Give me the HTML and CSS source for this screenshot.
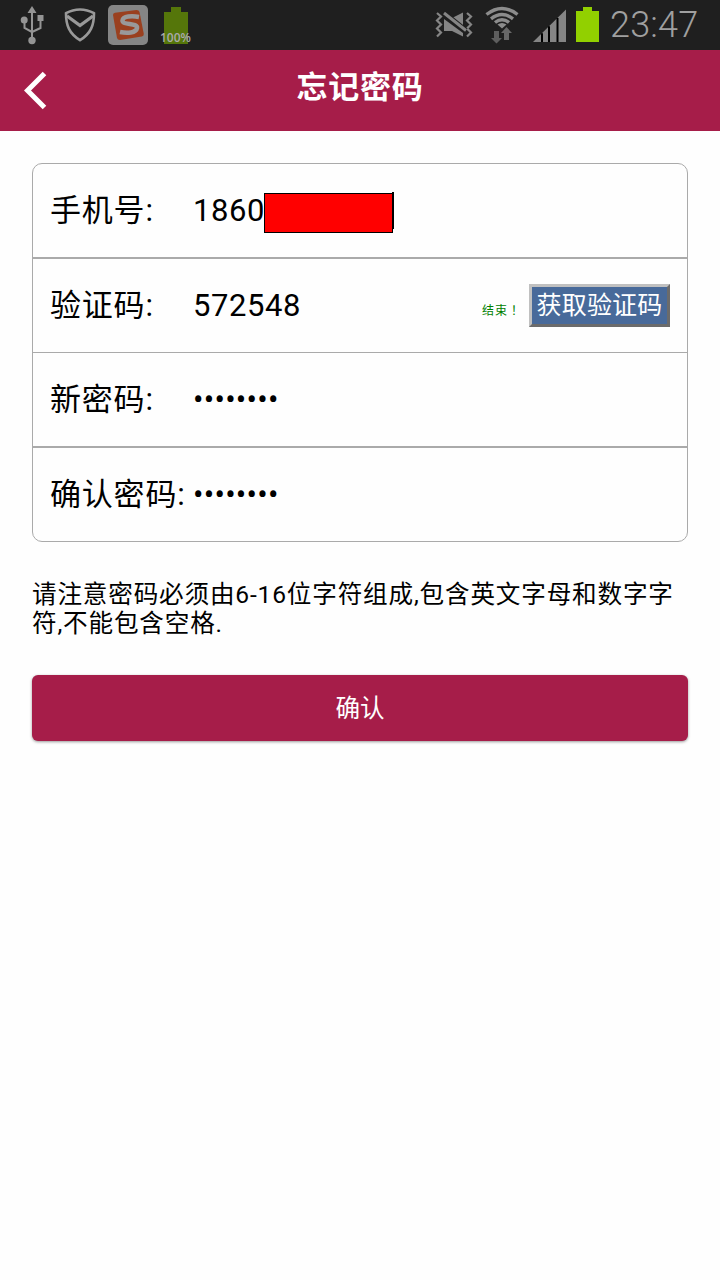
FILE: index.html
```html
<!DOCTYPE html>
<html lang="zh-CN">

<head>
    <meta charset="UTF-8">
    <meta name="viewport" content="width=device-width, initial-scale=1.0">
    <title>忘记密码</title>
    <link rel="stylesheet" href="styles.css">
</head>

<body>
    <div class="status-bar">
        <div class="status-left">
            <!-- usb -->
            <svg class="icon-usb" width="24" height="50" viewBox="0 0 24 50">
                <g fill="none" stroke="#949494" stroke-width="2">
                    <path d="M12 10v30M4.500 20v8l7.500 4M20.500 20v8L12 32" />
                </g>
                <path d="M12 6l4.500 7h-9zM17.500 15h6v6h-6z" fill="#949494" />
                <circle cx="4.200" cy="20" r="3.500" fill="#949494" />
                <circle cx="12" cy="40.500" r="3.700" fill="#949494" />
            </svg>
            <!-- shield -->
            <svg class="icon-shield" width="34" height="50" viewBox="0 0 34 50">
                <path d="M17 9.500c-4.500 0-9.500 1.200-14 3.700 0 12 3 20 14 27 11-7 14-15 14-27-4.500-2.500-9.500-3.700-14-3.700z" fill="none" stroke="#999" stroke-width="2.600" />
                <path d="M4 16l13 9.500L30 16" fill="none" stroke="#999" stroke-width="3.400" />
            </svg>
            <!-- input method -->
            <svg class="icon-ime" width="40" height="50" viewBox="0 0 40 50">
                <rect x="0" y="5" width="40" height="40" rx="5" fill="#858585" />
                <path d="M5 15q0-2 2-2.300L28.500 10q2.500 0 3 2l4.300 22q0 2-2 2.500L12 40q-2.500 0-3-2z" fill="#9a401f" />
                <path d="M31 17c-7-1.300-16-1-16.500 3.500-.4 5 15.500 2 14.500 7.500-.8 5-10 5.500-17 4" fill="none" stroke="#999" stroke-width="4.500" />
            </svg>
            <div class="battery-level">
                <svg width="32" height="50" viewBox="0 0 32 50">
                    <path d="M4 44V12h7V7h10v5h7v32z" fill="#55760a" />
                </svg>
                <span class="battery-text">100%</span>
            </div>
        </div>
        <div class="status-right">
            <!-- vibrate / mute -->
            <svg class="icon-mute" width="38" height="50" viewBox="0 0 38 50">
                <path d="M2 13l4 3.500-4 4 4 4-4 4 4 4-4 4M32 13l4 3.500-4 4 4 4-4 4 4 4-4 4" fill="none" stroke="#858585" stroke-width="2.200" />
                <path d="M17 18l11-5.500V26zM9 19l19 14v3.500L17 31H9z" fill="#858585" />
                <path d="M9 13l22 17.500" stroke="#1f1f1f" stroke-width="5" />
                <path d="M9 13l22 17.500" stroke="#858585" stroke-width="3" />
            </svg>
            <!-- wifi -->
            <svg class="icon-wifi" width="34" height="50" viewBox="0 0 34 50">
                <g fill="none" stroke="#8c8c8c" stroke-width="3.400">
                    <path d="M1.500 14.500q15.500-12 31 0" />
                    <path d="M6 18.800q11-8.500 22 0" />
                    <path d="M10 22.500q7-5.500 14 0" />
                </g>
                <path d="M12.500 24.500q4.500-3 9 0L17 28.500z" fill="#8c8c8c" />
                <path d="M9 31h5v7h3l-5.500 5.500L6 38h3z" fill="#5e5e5e" />
                <path d="M19 40h5v-7h3l-5.500-6L16 33h3z" fill="#686868" />
            </svg>
            <!-- signal -->
            <svg class="icon-signal" width="33" height="50" viewBox="0 0 33 50">
                <path d="M0 42L33 9.500V42z" fill="#858585" />
                <path d="M9 33.300v8.700M16 26.300V42M24.500 18V42" stroke="#000" stroke-width="2" />
            </svg>
            <svg class="icon-battery" width="23" height="50" viewBox="0 0 23 50">
                <path d="M0 42V11h7V7h9v4h7v31z" fill="#92d000" />
            </svg>
            <span class="clock">23:47</span>
        </div>
    </div>

    <div class="header">
        <a class="back" href="#">
            <svg width="24" height="40" viewBox="0 0 24 40">
                <path d="M20.500 3.500L3.500 20.500l17 17" fill="none" stroke="#fff" stroke-width="5" />
            </svg>
        </a>
        <h1>忘记密码</h1>
    </div>

    <div class="content">
        <div class="form-card">
            <div class="form-row thick">
                <label class="label">手机号:</label>
                <span class="value">1860</span>
                <span class="mask"></span>
                <span class="cursor"></span>
            </div>
            <div class="form-row">
                <label class="label">验证码:</label>
                <span class="value">572548</span>
                <span class="timer" lang="zh-TW">结束！</span>
                <button class="code-btn">获取验证码</button>
            </div>
            <div class="form-row thick">
                <label class="label">新密码:</label>
                <span class="value dots">••••••••</span>
            </div>
            <div class="form-row">
                <label class="label">确认密码:</label>
                <span class="value dots">••••••••</span>
            </div>
        </div>

        <p class="note">请注意密码必须由6-16位字符组成,包含英文字母和数字字符,不能包含空格.</p>

        <button class="submit-btn">确认</button>
    </div>
</body>

</html>
```

FILE: styles.css
```css
* {
    box-sizing: border-box;
}

body {
    margin: 0;
    background-color: #fefefe;
    color: #000;
    font-family: Roboto, "Noto Sans CJK SC", sans-serif;
}

svg {
    display: block;
}

.status-bar {
    display: flex;
    justify-content: space-between;
    height: 50px;
    padding: 0 21px 0 20px;
    background-color: #1f1f1f;
}

.status-left,
.status-right {
    display: flex;
}

.icon-shield {
    margin-left: 19px;
}

.icon-ime {
    margin-left: 11px;
}

.battery-level {
    position: relative;
    margin-left: 12px;
}

.battery-text {
    position: absolute;
    left: 0;
    top: 31px;
    color: #aaa;
    font-family: "Open Sans", sans-serif;
    font-size: 12px;
    font-weight: 600;
    line-height: 14px;
}

.icon-wifi {
    margin-left: 12px;
}

.icon-signal {
    margin-left: 14px;
}

.icon-battery {
    margin-left: 10px;
}

.clock {
    width: 89px;
    margin-left: 11px;
    color: #a0a0a0;
    font-size: 36px;
    font-weight: 300;
    letter-spacing: 0.2px;
    line-height: 50px;
    white-space: nowrap;
}

.header {
    display: flex;
    height: 81px;
    padding: 0 24px;
    background-color: #a61d49;
}

.back {
    width: 24px;
    padding-top: 20px;
}

.header h1 {
    flex: 1;
    margin: 0 24px 0 0;
    color: #fff;
    font-size: 31px;
    font-weight: bold;
    letter-spacing: 0.8px;
    line-height: 76px;
    text-align: center;
}

.content {
    padding: 32px;
}

.form-card {
    border: 1px solid #aaa;
    border-radius: 10px;
}

.form-row {
    display: flex;
    align-items: center;
    box-sizing: content-box;
    height: 93px;
    padding: 0 16px 0 17px;
    border-bottom: 1px solid #aaa;
    font-size: 31px;
    letter-spacing: 0.6px;
}

.form-row.thick {
    border-bottom-width: 2px;
}

.form-row:last-child {
    border-bottom: none;
}

.label {
    width: 143px;
    padding-bottom: 6px;
    letter-spacing: 0.8px;
    white-space: nowrap;
}

.value {
    padding-bottom: 1px;
}

.dots {
    letter-spacing: 0.25px;
}

.mask {
    width: 129px;
    height: 40px;
    margin: 5px 0 0 -1px;
    border: 1px solid #000;
    background-color: #f00;
}

.cursor {
    width: 2px;
    height: 37px;
    margin: 0 0 0 -1px;
    background-color: #000;
}

.timer {
    margin: 7px 8px 0 auto;
    color: #008000;
    font-family: "Noto Sans CJK TC", sans-serif;
    font-size: 12px;
    letter-spacing: 1px;
}

.code-btn {
    width: 141px;
    height: 43px;
    margin-right: 1px;
    padding: 0;
    border: 3px solid;
    border-color: #c0c0c0 #6b6b6b #6b6b6b #c0c0c0;
    background-color: #486a9a;
    color: #fff;
    font-family: inherit;
    font-size: 25px;
    letter-spacing: 0.2px;
    line-height: 36px;
    white-space: nowrap;
}

.note {
    margin: 38px 0 0;
    font-size: 24.6px;
    letter-spacing: 0.82px;
    line-height: 29px;
}

.submit-btn {
    display: block;
    width: 100%;
    height: 66px;
    margin-top: 37px;
    padding: 0;
    border: none;
    border-radius: 6px;
    background-color: #a61d49;
    box-shadow: 0 1px 3px rgba(0, 0, 0, 0.4);
    color: #fff;
    font-family: inherit;
    font-size: 24.6px;
    line-height: 68px;
}
```
